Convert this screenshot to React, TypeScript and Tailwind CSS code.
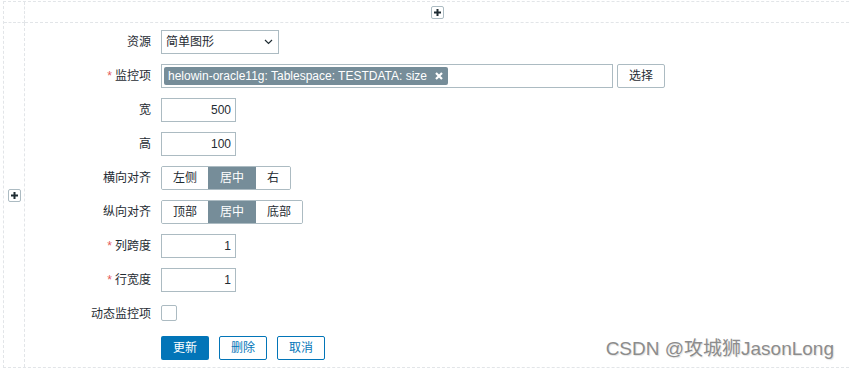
import React from 'react';

const font = "font-['Liberation_Sans','Noto_Sans_CJK_SC',sans-serif]";

const PlusButton: React.FC = () => (
  <div className="w-[13px] h-[13px] border border-[#acbbc2] rounded-[2px] bg-white flex items-center justify-center">
    <svg width="7" height="7" viewBox="0 0 7 7">
      <path d="M3.5 0v7M0 3.5h7" stroke="#1f2c33" strokeWidth="2" />
    </svg>
  </div>
);

const Row: React.FC<{ label: string; required?: boolean; children: React.ReactNode }> = ({ label, required, children }) => (
  <div className="flex items-center h-6">
    <div className="w-[126px] shrink-0 text-right text-[#1f2c33]">
      {required && <span className="text-[#e45959] mr-[3px]">*</span>}
      {label}
    </div>
    <div className="ml-[10px] flex items-center">{children}</div>
  </div>
);

const NumInput: React.FC<{ value: string }> = ({ value }) => (
  <div className="w-[75px] h-6 border border-[#acbbc2] bg-white flex items-center justify-end pr-[4px] text-[#1f2c33]">
    {value}
  </div>
);

const Segmented: React.FC<{ items: string[]; active: number }> = ({ items, active }) => (
  <div className="flex h-6 border border-[#acbbc2] rounded-[2px] overflow-hidden">
    {items.map((t, i) => (
      <div
        key={t + i}
        className={`flex items-center px-[11px] ${i === active ? 'bg-[#768d99] text-white px-[12px]' : 'bg-white text-[#1f2c33]'}`}
      >
        {t}
      </div>
    ))}
  </div>
);

export default function App() {
  return (
    <div className={`relative w-[849px] h-[369px] bg-white overflow-hidden text-[12px] ${font}`}>
      <div className="ml-[3px] mt-[1px] w-[846px] grid grid-cols-[21px_824px] grid-rows-[21px_344px] border-t border-l border-b border-dashed border-[#e2e5e8]">
        <div className="border-r border-b border-dashed border-[#e2e5e8]" />
        <div className="border-b border-dashed border-[#e2e5e8] flex items-center justify-center">
          <PlusButton />
        </div>
        <div className="border-r border-dashed border-[#e2e5e8] flex items-center justify-center">
          <PlusButton />
        </div>

        <div className="pt-[7px] flex flex-col gap-[10px]">
          <Row label="资源">
            <div className="w-[118px] h-6 border border-[#acbbc2] bg-white flex items-center justify-between pl-[4px] pr-[5px] text-[#1f2c33]">
              <span>简单图形</span>
              <svg width="9" height="6" viewBox="0 0 9 6">
                <path d="M1 1l3.5 3.5L8 1" stroke="#1f2c33" strokeWidth="1.2" fill="none" />
              </svg>
            </div>
          </Row>

          <Row label="监控项" required>
            <div className="w-[452px] h-6 border border-[#acbbc2] bg-white flex items-center pl-[2px]">
              <div className="h-[18px] bg-[#768d99] text-white rounded-[2px] flex items-center pl-[4px] pr-[5px] gap-[8px]">
                <span>helowin-oracle11g: Tablespace: TESTDATA: size</span>
                <svg width="8" height="8" viewBox="0 0 8 8">
                  <path d="M1 1l6 6M7 1L1 7" stroke="#ffffff" strokeWidth="2.2" />
                </svg>
              </div>
            </div>
            <div className="ml-[4px] w-[48px] h-6 border border-[#acbbc2] rounded-[2px] bg-white flex items-center justify-center text-[#1f2c33]">
              选择
            </div>
          </Row>

          <Row label="宽">
            <NumInput value="500" />
          </Row>
          <Row label="高">
            <NumInput value="100" />
          </Row>

          <Row label="横向对齐">
            <Segmented items={['左侧', '居中', '右']} active={1} />
          </Row>
          <Row label="纵向对齐">
            <Segmented items={['顶部', '居中', '底部']} active={1} />
          </Row>

          <Row label="列跨度" required>
            <NumInput value="1" />
          </Row>
          <Row label="行宽度" required>
            <NumInput value="1" />
          </Row>

          <Row label="动态监控项">
            <div className="w-[16px] h-[16px] border border-[#acbbc2] rounded-[2px] bg-white mt-[-3px]" />
          </Row>

          <div className="flex items-center h-6 pl-[136px] gap-[10px]">
            <div className="w-[48px] h-6 rounded-[2px] bg-[#0275b8] text-white flex items-center justify-center">更新</div>
            <div className="w-[48px] h-6 rounded-[2px] border border-[#0275b8] text-[#0275b8] bg-white flex items-center justify-center">删除</div>
            <div className="w-[48px] h-6 rounded-[2px] border border-[#0275b8] text-[#0275b8] bg-white flex items-center justify-center">取消</div>
          </div>
        </div>
      </div>

      <div className="absolute right-[15px] top-[335px] text-[19px] text-[#8c8c8c] [text-shadow:1px_1px_1px_rgba(0,0,0,0.12)] font-['Liberation_Sans','Noto_Sans_CJK_SC',sans-serif]">
        CSDN @攻城狮JasonLong
      </div>
    </div>
  );
}
